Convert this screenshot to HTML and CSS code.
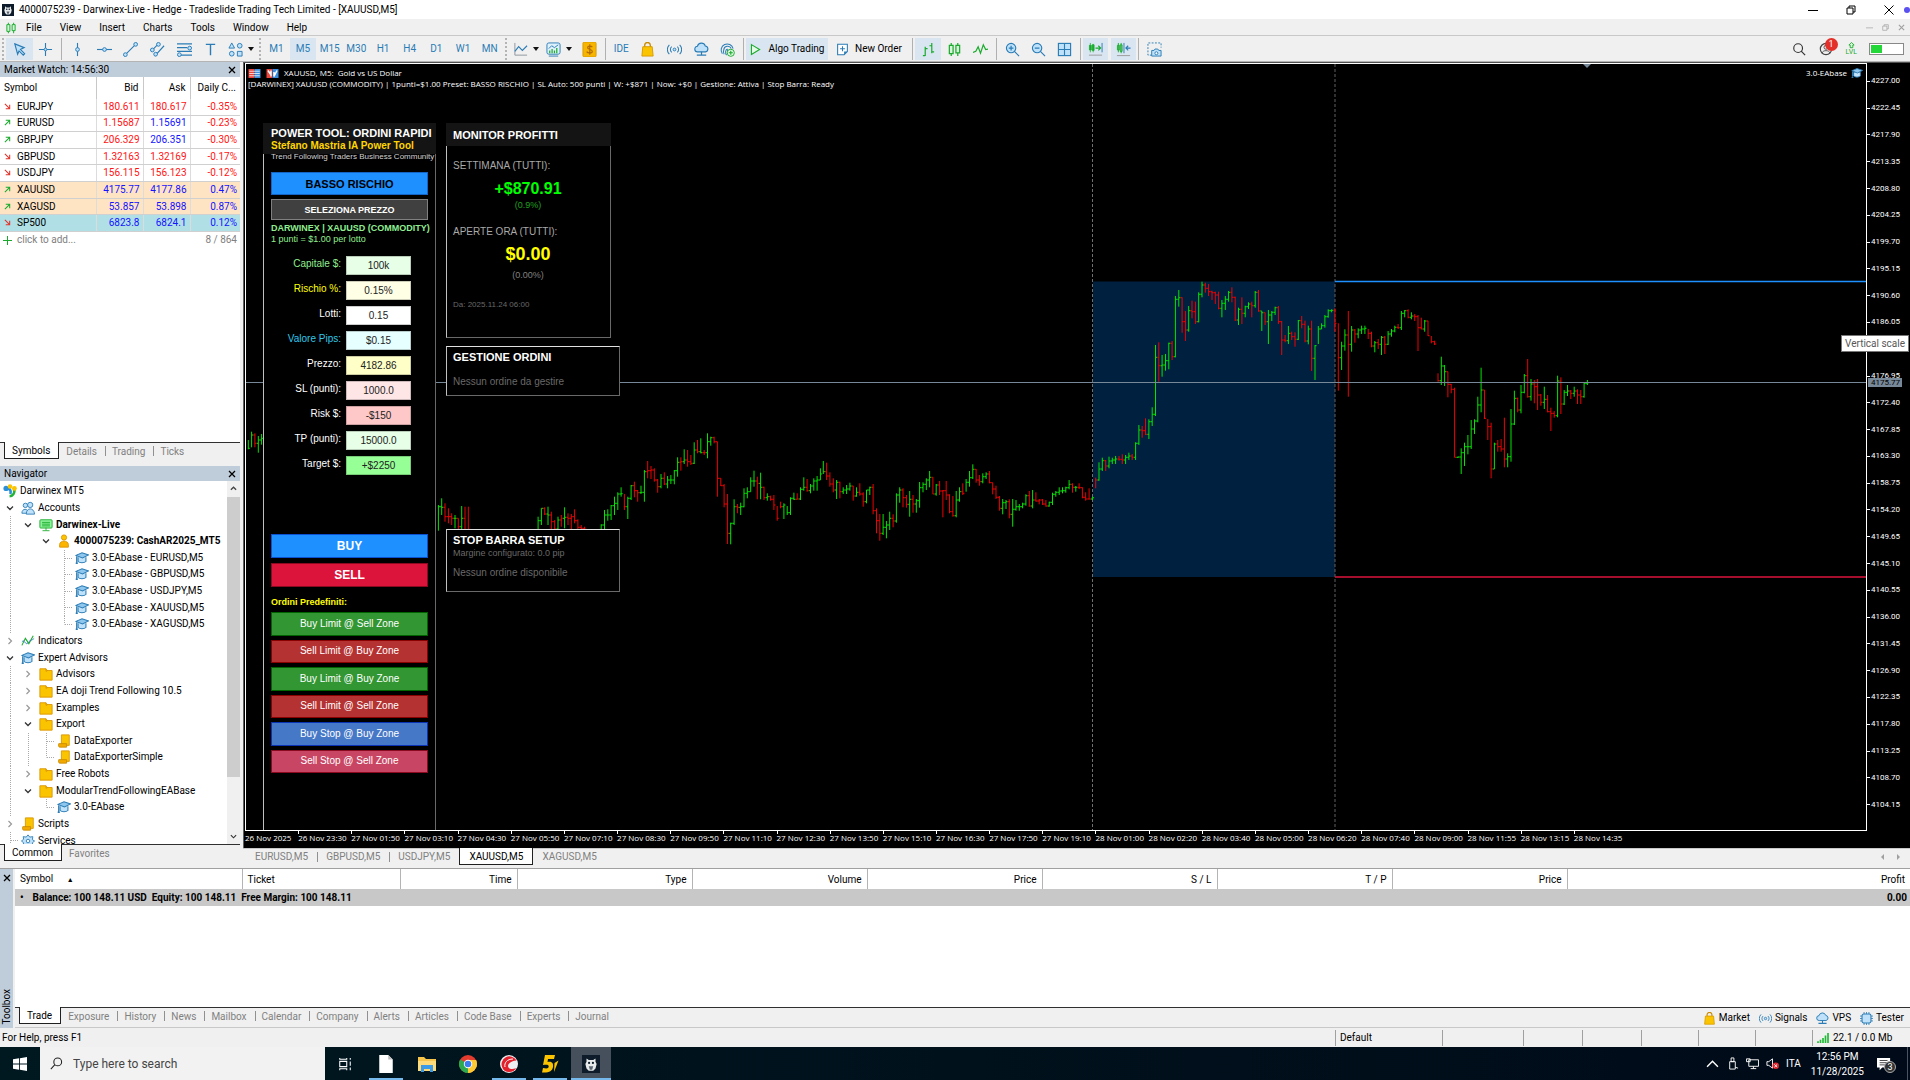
FILE: index.html
```html
<!DOCTYPE html>
<html lang="en">
<head>
  <meta charset="UTF-8">
  <meta name="viewport" content="width=device-width, initial-scale=1.0">
  <title>4000075239 - Darwinex-Live - Hedge</title>
  <link rel="stylesheet" href="styles.css">
</head>
<body>
  <svg class="defs" aria-hidden="true">
    <symbol id="i-owl" viewBox="0 0 16 16"><rect width="16" height="16" fill="#0d1b2a"/><path d="M4 3l2 1.500h4L12 3v3l1 2-1 4-2 2H6l-2-2-1-4 1-2z" fill="#e8eaec"/><circle cx="6.300" cy="7" r="1" fill="#0d1b2a"/><circle cx="9.700" cy="7" r="1" fill="#0d1b2a"/><path d="M6 10h4l-1 3H7z" fill="#5c6773"/></symbol>
    <symbol id="i-candles" viewBox="0 0 16 16"><path d="M4.500 1v2M4.500 13v2M11.500 1v2M11.500 12v3M2.500 3.500h4v9h-4zM9.500 3.500h4v8h-4z" fill="#d8f5dc" stroke="#1aab2c" stroke-width="1.300"/></symbol>
    <symbol id="i-cursor" viewBox="0 0 16 16"><path d="M3 2l10 4-4 2 4.500 4.500-1.500 1.500L7.500 9.500 6 13z" fill="#bfe2fa" stroke="#2b7cb5" stroke-width="1.200"/></symbol>
    <symbol id="i-cross" viewBox="0 0 16 16"><path d="M8 1v14M1 8h14" stroke="#2b7cb5" stroke-width="1.200"/><circle cx="8" cy="8" r="1.500" fill="#bfe2fa" stroke="#2b7cb5"/></symbol>
    <symbol id="i-vline" viewBox="0 0 16 16"><path d="M8 1v14" stroke="#2b7cb5" stroke-width="1.200"/><circle cx="8" cy="8" r="2" fill="#bfe2fa" stroke="#2b7cb5"/></symbol>
    <symbol id="i-hline" viewBox="0 0 16 16"><path d="M0 8h16" stroke="#2b7cb5" stroke-width="1.200"/><circle cx="8" cy="8" r="2" fill="#bfe2fa" stroke="#2b7cb5"/></symbol>
    <symbol id="i-trend" viewBox="0 0 16 16"><path d="M2 14L14 2" stroke="#2b7cb5" stroke-width="1.200"/><circle cx="2.500" cy="13.500" r="2" fill="#bfe2fa" stroke="#2b7cb5"/><circle cx="13.500" cy="2.500" r="2" fill="#bfe2fa" stroke="#2b7cb5"/></symbol>
    <symbol id="i-channel" viewBox="0 0 16 16"><path d="M2 9l7-7M5 15L15 4" stroke="#2b7cb5" stroke-width="1.200"/><circle cx="2.500" cy="8.500" r="2" fill="#bfe2fa" stroke="#2b7cb5"/><circle cx="9" cy="2.500" r="2" fill="#bfe2fa" stroke="#2b7cb5"/><circle cx="6" cy="13" r="2" fill="#bfe2fa" stroke="#2b7cb5"/></symbol>
    <symbol id="i-fibo" viewBox="0 0 16 16"><path d="M0 2h16M0 6h11M0 10h16M4 14h12" stroke="#2b7cb5" stroke-width="1.200"/><circle cx="13.500" cy="6.500" r="2" fill="#bfe2fa" stroke="#2b7cb5"/><circle cx="2.500" cy="13.500" r="2" fill="#bfe2fa" stroke="#2b7cb5"/></symbol>
    <symbol id="i-text" viewBox="0 0 16 16"><path d="M3 2.500h10M8 2.500V14" stroke="#2b7cb5" stroke-width="1.500"/></symbol>
    <symbol id="i-shapes" viewBox="0 0 16 16"><path d="M4 1l3 5.500H1zM10 10h5v5h-5z" fill="#bfe2fa" stroke="#2b7cb5"/><circle cx="12.500" cy="4" r="2.500" fill="#bfe2fa" stroke="#2b7cb5"/><circle cx="4" cy="12.500" r="2.500" fill="#bfe2fa" stroke="#2b7cb5"/></symbol>
    <symbol id="i-caret" viewBox="0 0 6 4"><path d="M0 0h6L3 4z" fill="#111"/></symbol>
    <symbol id="i-linechart" viewBox="0 0 16 16"><path d="M2 1v13h13" stroke="#8a949c" fill="none"/><path d="M2 10l4-5 4 4 5-5" stroke="#2b7cb5" fill="none" stroke-width="1.200"/></symbol>
    <symbol id="i-indic" viewBox="0 0 16 16"><rect x="1" y="1" width="14" height="12" rx="2" fill="#dff1fd" stroke="#2b7cb5"/><path d="M3 7l3-3 3 2 4-3" stroke="#2b7cb5" fill="none"/><path d="M4 12V9M6.500 12V7.500M9 12V9M11.500 12V6.500" stroke="#1aab2c" stroke-width="1.300"/><path d="M3 15h10" stroke="#2b7cb5"/></symbol>
    <symbol id="i-dollar" viewBox="0 0 16 16"><rect x="1" y="0" width="14" height="16" rx="1.500" fill="#f7b500" stroke="#d79a00"/><path d="M11 5.500C10 4 6 4 6 6s5 1.500 5 4-5 2-6 .3M8.300 2.500v11" stroke="#b36b00" fill="none" stroke-width="1.300"/></symbol>
    <symbol id="i-bag" viewBox="0 0 16 16"><path d="M5 6V3.500a3 3 0 016 0V6" fill="none" stroke="#c98a00" stroke-width="1.400"/><path d="M3 5h10l1 10H2z" fill="#fbc400" stroke="#d79a00"/></symbol>
    <symbol id="i-signal" viewBox="0 0 16 16"><circle cx="8" cy="8" r="1.500" fill="#bfe2fa" stroke="#2b7cb5"/><path d="M5 5a4 4 0 000 6M11 5a4 4 0 010 6M2.500 3a7 7 0 000 10M13.500 3a7 7 0 010 10" fill="none" stroke="#2b7cb5" stroke-width="1.100"/></symbol>
    <symbol id="i-cloud" viewBox="0 0 16 16"><path d="M4 10.500a3 3 0 01-.3-6A4.300 4.300 0 0112 4.200a3.200 3.200 0 01.3 6.300z" fill="#bfe2fa" stroke="#2b7cb5" stroke-width="1.200"/><path d="M8 10.500v3M3 14h10" stroke="#2b7cb5" stroke-width="1.300"/></symbol>
    <symbol id="i-finger" viewBox="0 0 16 16"><path d="M2.500 12.500a6.500 6.500 0 1111.500-5.500M4.500 13a4.500 4.500 0 01-.5-4.500 4.200 4.200 0 018-1.500M7 14c-1.500-2-1.500-6 1-6.500M8 8v2" fill="none" stroke="#2b7cb5" stroke-width="1.100"/><circle cx="11.500" cy="11.500" r="3.800" fill="#e4fbe6" stroke="#1aab2c"/><path d="M11.500 9.300v4.400M9.300 11.500h4.400" stroke="#1aab2c" stroke-width="1.200"/></symbol>
    <symbol id="i-play" viewBox="0 0 16 16"><path d="M3 2l10 6-10 6z" fill="#e4fbe6" stroke="#1aab2c" stroke-width="1.400"/></symbol>
    <symbol id="i-order" viewBox="0 0 16 16"><path d="M2 1.500h12v9l-4 4H2z" fill="#fff" stroke="#2b7cb5" stroke-width="1.300"/><path d="M14 10.500h-4v4z" fill="#2b7cb5"/><path d="M8 4v6M5 7h6" stroke="#2b7cb5" stroke-width="1.300"/></symbol>
    <symbol id="i-bars" viewBox="0 0 16 16"><path d="M4.500 5v10M2 14.500h2.500M4.500 7H7M11.500 1v11M9 4h2.500M11.500 10.500H14" stroke="#1aab2c" stroke-width="1.300"/></symbol>
    <symbol id="i-zig" viewBox="0 0 16 16"><path d="M0 11l3-1 2.500-5L8 12l3-9 2.500 5 2.500-.5" fill="none" stroke="#1aab2c" stroke-width="1.300"/></symbol>
    <symbol id="i-zin" viewBox="0 0 16 16"><circle cx="6.500" cy="6.500" r="5" fill="#bfe2fa" stroke="#2b7cb5" stroke-width="1.200"/><path d="M10 10l5 5M4 6.500h5M6.500 4v5" stroke="#2b7cb5" stroke-width="1.300"/></symbol>
    <symbol id="i-zout" viewBox="0 0 16 16"><circle cx="6.500" cy="6.500" r="5" fill="#bfe2fa" stroke="#2b7cb5" stroke-width="1.200"/><path d="M10 10l5 5M4 6.500h5" stroke="#2b7cb5" stroke-width="1.300"/></symbol>
    <symbol id="i-grid" viewBox="0 0 16 16"><rect x="1.500" y="1.500" width="13" height="13" fill="#bfe2fa" stroke="#2b7cb5" stroke-width="1.200"/><path d="M8 1.500v13M1.500 8h13" stroke="#2b7cb5" stroke-width="1.200"/></symbol>
    <symbol id="i-shift" viewBox="0 0 16 16"><path d="M2.500 1v10M5.500 2v9M1.500 3.500h2v5h-2zM4.500 3h2v6h-2z" stroke="#1aab2c" fill="#1aab2c" stroke-width=".8"/><path d="M8 6.500h5M11 4l2.500 2.500L11 9" stroke="#1aab2c" fill="none" stroke-width="1.200"/><path d="M15 1v10" stroke="#2b7cb5"/><path d="M1 14h14" stroke="#999"/></symbol>
    <symbol id="i-scroll" viewBox="0 0 16 16"><path d="M2.500 1v10M5.500 1v11M1.500 3.500h2v5h-2zM4.500 3h2v7h-2z" stroke="#1aab2c" fill="none"/><path d="M8.500 1v11" stroke="#2b7cb5"/><path d="M15.500 6.500h-5M13 4l-2.500 2.500L13 9" stroke="#2b7cb5" fill="none" stroke-width="1.200"/><path d="M1 14.500h14" stroke="#999"/></symbol>
    <symbol id="i-camera" viewBox="0 0 16 16"><path d="M5 14H1V1h14v5" fill="none" stroke="#2b7cb5" stroke-dasharray="2 1.500"/><path d="M5 9h2.500l1-1.500h3L12.500 9H15v6H5z" fill="#bfe2fa" stroke="#2b7cb5"/><circle cx="10" cy="12" r="1.600" fill="#fff" stroke="#2b7cb5"/></symbol>
    <symbol id="i-search" viewBox="0 0 16 16"><circle cx="7" cy="7" r="5" fill="none" stroke="currentColor" stroke-width="1.300"/><path d="M10.500 10.500L15 15" stroke="currentColor" stroke-width="1.400"/></symbol>
    <symbol id="i-tsearch" viewBox="0 0 16 16"><circle cx="9.500" cy="6" r="4.800" fill="none" stroke="#222" stroke-width="1.300"/><path d="M6 9.500L1 15" stroke="#222" stroke-width="1.300"/></symbol>
    <symbol id="i-user" viewBox="0 0 16 16"><circle cx="8" cy="8" r="6.500" fill="none" stroke="#444" stroke-width="1.300"/><circle cx="8" cy="6" r="2.300" fill="none" stroke="#444"/><path d="M3.500 12.500c1-3.500 8-3.500 9 0" fill="none" stroke="#444"/></symbol>
    <symbol id="i-up" viewBox="0 0 8 8"><path d="M4 .5l3 3H5.500v3h-3v-3H1z" fill="#d8f5dc" stroke="#1aab2c"/></symbol>
    <symbol id="i-cap" viewBox="0 0 16 16"><path d="M3.500 7v5c2 2 7 2 9 0V7" fill="#bfe2fa" stroke="#2b7cb5" stroke-width="1.200"/><path d="M1 5l7-3 7.500 2.500L8.500 8z" fill="#8fc7ee" stroke="#2b7cb5" stroke-width="1.200"/><path d="M2 6v7M.8 14h2.400" stroke="#2b7cb5" stroke-width="1.500"/></symbol>
    <symbol id="i-people" viewBox="0 0 16 16"><circle cx="5" cy="5" r="2.500" fill="#bfe2fa" stroke="#2b7cb5"/><path d="M1 14c0-6 7-6 8 0z" fill="#bfe2fa" stroke="#2b7cb5"/><circle cx="10.500" cy="4.500" r="3" fill="#bfe2fa" stroke="#2b7cb5"/><path d="M6 15c0-8 9-8 9.500 0z" fill="#bfe2fa" stroke="#2b7cb5"/></symbol>
    <symbol id="i-server" viewBox="0 0 16 16"><rect x="1" y="2" width="14" height="9.500" rx="1" fill="#8df09a" stroke="#1aab2c"/><path d="M3.500 5h9M3.500 7h9M3.500 9h9M4 14.500h8M8 11v3" stroke="#1aab2c"/></symbol>
    <symbol id="i-person" viewBox="0 0 16 16"><circle cx="8" cy="4" r="3" fill="#fbc400" stroke="#d99500"/><path d="M3 15V12c0-5 10-5 10 0v3z" fill="#fbb400" stroke="#d99500"/></symbol>
    <symbol id="i-ind" viewBox="0 0 16 16"><path d="M1 13l4-8 4 6 5-9" fill="none" stroke="#1aab2c" stroke-width="1.200"/><path d="M1 9c3-4 4 5 7 1s4-2 7-5" fill="none" stroke="#2b7cb5"/></symbol>
    <symbol id="i-folder" viewBox="0 0 16 16"><path d="M1 2h7l1 2h6v11H1z" fill="#fbc400" stroke="#d99500"/><path d="M8 2v3l2-1" stroke="#d99500" fill="none"/></symbol>
    <symbol id="i-script" viewBox="0 0 16 16"><path d="M5 1h9v12H5z" fill="#fbc400" stroke="#d99500"/><path d="M2 11h9v4H3c-1.500 0-1.500-3-1-4z" fill="#f2a900" stroke="#c98a00"/></symbol>
    <symbol id="i-gear" viewBox="0 0 16 16"><path d="M8 1l2 2.500 3.500-.5-.5 3.500L15.500 8 13 10l.5 3.500-3.500-.5L8 15.500 6 13l-3.500.5L3 10 .5 8 3 6 2.500 3l3.500.5z" fill="#bfe2fa" stroke="#2b7cb5"/><circle cx="8" cy="8" r="2" fill="#fff" stroke="#2b7cb5"/></symbol>
    <symbol id="i-mt5" viewBox="0 0 16 16"><path d="M3 5.500c5-1 6.500 1.500 5.500 6" stroke="#2b8fd8" fill="none" stroke-width="3"/><path d="M7.500 14c4 0 6-3.500 5.500-8.500" stroke="#22b43a" fill="none" stroke-width="3"/><circle cx="3.500" cy="5" r="3" fill="#2b8fd8"/><circle cx="8" cy="2.800" r="2.600" fill="#fbc400"/><circle cx="13" cy="5" r="2.800" fill="#fbc400"/></symbol>
    <symbol id="i-down" viewBox="0 0 8 8"><path d="M1 2.500l3 3 3-3" fill="none" stroke="#333" stroke-width="1.300"/></symbol>
    <symbol id="i-right" viewBox="0 0 8 8"><path d="M2.500 1l3 3-3 3" fill="none" stroke="#999" stroke-width="1.200"/></symbol>
    <symbol id="i-scup" viewBox="0 0 8 8"><path d="M1 5.500l3-3 3 3" fill="none" stroke="#444" stroke-width="1.500"/></symbol>
    <symbol id="i-ne" viewBox="0 0 8 8"><path d="M1 7l5.500-5.500M2 1.500h4.500V6" fill="none" stroke="#1aab2c" stroke-width="1.200"/></symbol>
    <symbol id="i-se" viewBox="0 0 8 8"><path d="M1 1l5.500 5.500M2 6.500h4.500V2" fill="none" stroke="#e0342b" stroke-width="1.200"/></symbol>
    <symbol id="i-x" viewBox="0 0 8 8"><path d="M1 1l6 6M7 1L1 7" stroke="currentColor" stroke-width="1.300"/></symbol>
    <symbol id="i-close" viewBox="0 0 10 10"><path d="M.5.5l9 9M9.500.5l-9 9" stroke="currentColor"/></symbol>
    <symbol id="i-min" viewBox="0 0 10 10"><path d="M0 5.500h10" stroke="currentColor"/></symbol>
    <symbol id="i-restore" viewBox="0 0 10 10"><path d="M1 3h6v6H1zM3 3V1h6v6H7" fill="none" stroke="currentColor"/></symbol>
    <symbol id="i-chip" viewBox="0 0 16 16"><path d="M5 0v16M8 0v16M11 0v16M0 5h16M0 8h16M0 11h16" stroke="#2b7cb5"/><rect x="2.500" y="2.500" width="11" height="11" rx="2" fill="#bfe2fa" stroke="#2b7cb5" stroke-width="1.300"/></symbol>
  </svg>

  <header class="titlebar">
    <svg class="icon12"><use href="#i-owl"/></svg>
    <h1>4000075239 - Darwinex-Live - Hedge - Tradeslide Trading Tech Limited - [XAUUSD,M5]</h1>
    <div class="win-controls">
      <button aria-label="Minimize"><svg><use href="#i-min"/></svg></button>
      <button aria-label="Restore"><svg><use href="#i-restore"/></svg></button>
      <button aria-label="Close"><svg><use href="#i-close"/></svg></button>
      <span class="rec-dot"></span>
    </div>
  </header>

  <nav class="menubar">
    <svg class="icon12"><use href="#i-candles"/></svg>
    <button>File</button>
    <button>View</button>
    <button>Insert</button>
    <button>Charts</button>
    <button>Tools</button>
    <button>Window</button>
    <button>Help</button>
    <div class="mdi-controls">
      <button aria-label="Minimize chart"><svg><use href="#i-min"/></svg></button>
      <button aria-label="Restore chart"><svg><use href="#i-restore"/></svg></button>
      <button aria-label="Close chart"><svg><use href="#i-x"/></svg></button>
    </div>
  </nav>

  <div class="toolbar">
    <i class="grip"></i>
    <div class="group w53">
      <button class="on" aria-label="Cursor"><svg><use href="#i-cursor"/></svg></button>
      <button aria-label="Crosshair"><svg><use href="#i-cross"/></svg></button>
    </div>
    <i class="sep"></i>
    <div class="group w160">
      <button aria-label="Vertical line"><svg><use href="#i-vline"/></svg></button>
      <button aria-label="Horizontal line"><svg><use href="#i-hline"/></svg></button>
      <button aria-label="Trendline"><svg><use href="#i-trend"/></svg></button>
      <button aria-label="Channel"><svg><use href="#i-channel"/></svg></button>
      <button aria-label="Fibonacci"><svg><use href="#i-fibo"/></svg></button>
      <button aria-label="Text"><svg><use href="#i-text"/></svg></button>
    </div>
    <div class="group w33">
      <button aria-label="Shapes"><svg><use href="#i-shapes"/></svg><svg class="caret"><use href="#i-caret"/></svg></button>
    </div>
    <i class="grip"></i>
    <div class="group w240">
      <button>M1</button>
      <button class="on">M5</button>
      <button>M15</button>
      <button>M30</button>
      <button>H1</button>
      <button>H4</button>
      <button>D1</button>
      <button>W1</button>
      <button>MN</button>
    </div>
    <i class="grip"></i>
    <div class="group w67">
      <button aria-label="Chart type"><svg><use href="#i-linechart"/></svg><svg class="caret"><use href="#i-caret"/></svg></button>
      <button aria-label="Indicators"><svg><use href="#i-indic"/></svg><svg class="caret"><use href="#i-caret"/></svg></button>
    </div>
    <div class="group w27">
      <button aria-label="Deposit"><svg><use href="#i-dollar"/></svg></button>
    </div>
    <i class="sep"></i>
    <div class="group w133">
      <button>IDE</button>
      <button aria-label="Market"><svg><use href="#i-bag"/></svg></button>
      <button aria-label="Signals"><svg><use href="#i-signal"/></svg></button>
      <button aria-label="VPS"><svg><use href="#i-cloud"/></svg></button>
      <button aria-label="Copy"><svg><use href="#i-finger"/></svg></button>
    </div>
    <i class="sep"></i>
    <div class="group text">
      <button class="on"><svg><use href="#i-play"/></svg>Algo Trading</button>
      <button><svg><use href="#i-order"/></svg>New Order</button>
    </div>
    <i class="sep"></i>
    <div class="group w79">
      <button class="on" aria-label="Bar chart"><svg><use href="#i-bars"/></svg></button>
      <button aria-label="Candlesticks"><svg><use href="#i-candles"/></svg></button>
      <button aria-label="Line chart"><svg><use href="#i-zig"/></svg></button>
    </div>
    <i class="sep"></i>
    <div class="group w79">
      <button aria-label="Zoom in"><svg><use href="#i-zin"/></svg></button>
      <button aria-label="Zoom out"><svg><use href="#i-zout"/></svg></button>
      <button aria-label="Tile windows"><svg><use href="#i-grid"/></svg></button>
    </div>
    <i class="sep"></i>
    <div class="group pair w53">
      <button class="on" aria-label="Auto scroll"><svg><use href="#i-shift"/></svg></button>
      <button class="on" aria-label="Chart shift"><svg><use href="#i-scroll"/></svg></button>
    </div>
    <i class="sep"></i>
    <div class="group w27">
      <button aria-label="Screenshot"><svg><use href="#i-camera"/></svg></button>
    </div>
    <div class="toolbar-right">
      <button aria-label="Search"><svg class="icon14"><use href="#i-search"/></svg></button>
      <button class="account" aria-label="Account"><svg class="icon14"><use href="#i-user"/></svg><span class="badge">1</span></button>
      <span class="lvl"><svg><use href="#i-up"/></svg>LVL</span>
      <span class="battery"><i></i></span>
    </div>
  </div>

  <main>
    <aside>
      <section class="dock">
        <h2>Market Watch: 14:56:30<button aria-label="Close Market Watch"><svg><use href="#i-x"/></svg></button></h2>
        <table class="quotes">
          <thead>
            <tr><th>Symbol</th><th>Bid</th><th>Ask</th><th>Daily C...</th></tr>
          </thead>
          <tbody>
            <tr><td><svg><use href="#i-se"/></svg>EURJPY</td><td class="dn">180.611</td><td class="dn">180.617</td><td class="dn">-0.35%</td></tr>
            <tr><td><svg><use href="#i-ne"/></svg>EURUSD</td><td class="dn">1.15687</td><td class="up">1.15691</td><td class="dn">-0.23%</td></tr>
            <tr><td><svg><use href="#i-ne"/></svg>GBPJPY</td><td class="dn">206.329</td><td class="up">206.351</td><td class="dn">-0.30%</td></tr>
            <tr><td><svg><use href="#i-se"/></svg>GBPUSD</td><td class="dn">1.32163</td><td class="dn">1.32169</td><td class="dn">-0.17%</td></tr>
            <tr><td><svg><use href="#i-se"/></svg>USDJPY</td><td class="dn">156.115</td><td class="dn">156.123</td><td class="dn">-0.12%</td></tr>
            <tr class="metal"><td><svg><use href="#i-ne"/></svg>XAUUSD</td><td class="up">4175.77</td><td class="up">4177.86</td><td class="up">0.47%</td></tr>
            <tr class="metal"><td><svg><use href="#i-ne"/></svg>XAGUSD</td><td class="up">53.857</td><td class="up">53.898</td><td class="up">0.87%</td></tr>
            <tr class="index"><td><svg><use href="#i-se"/></svg>SP500</td><td class="up">6823.8</td><td class="up">6824.1</td><td class="up">0.12%</td></tr>
          </tbody>
        </table>
        <div class="add-row"><span class="plus"></span><span>click to add...</span><span class="count">8 / 864</span></div>
        <div class="tabs">
          <button class="active">Symbols</button>
          <button>Details</button>
          <button>Trading</button>
          <button>Ticks</button>
        </div>
      </section>

      <section class="dock">
        <h2>Navigator<button aria-label="Close Navigator"><svg><use href="#i-x"/></svg></button></h2>
        <div class="tree-wrap">
          <ul class="tree">
            <li><svg><use href="#i-mt5"/></svg>Darwinex MT5</li>
            <li><i class="g"><svg><use href="#i-down"/></svg></i><svg><use href="#i-people"/></svg>Accounts</li>
            <li><i class="g v"></i><i class="g"><svg><use href="#i-down"/></svg></i><svg><use href="#i-server"/></svg><b>Darwinex-Live</b></li>
            <li><i class="g v"></i><i class="g"></i><i class="g"><svg><use href="#i-down"/></svg></i><svg><use href="#i-person"/></svg><b>4000075239: CashAR2025_MT5</b></li>
            <li><i class="g v"></i><i class="g"></i><i class="g"></i><i class="g v h"></i><svg><use href="#i-cap"/></svg>3.0-EAbase - EURUSD,M5</li>
            <li><i class="g v"></i><i class="g"></i><i class="g"></i><i class="g v h"></i><svg><use href="#i-cap"/></svg>3.0-EAbase - GBPUSD,M5</li>
            <li><i class="g v"></i><i class="g"></i><i class="g"></i><i class="g v h"></i><svg><use href="#i-cap"/></svg>3.0-EAbase - USDJPY,M5</li>
            <li><i class="g v"></i><i class="g"></i><i class="g"></i><i class="g v h"></i><svg><use href="#i-cap"/></svg>3.0-EAbase - XAUUSD,M5</li>
            <li><i class="g v"></i><i class="g"></i><i class="g"></i><i class="g v h end"></i><svg><use href="#i-cap"/></svg>3.0-EAbase - XAGUSD,M5</li>
            <li><i class="g"><svg><use href="#i-right"/></svg></i><svg><use href="#i-ind"/></svg>Indicators</li>
            <li><i class="g"><svg><use href="#i-down"/></svg></i><svg><use href="#i-cap"/></svg>Expert Advisors</li>
            <li><i class="g v"></i><i class="g"><svg><use href="#i-right"/></svg></i><svg><use href="#i-folder"/></svg>Advisors</li>
            <li><i class="g v"></i><i class="g"><svg><use href="#i-right"/></svg></i><svg><use href="#i-folder"/></svg>EA doji Trend Following 10.5</li>
            <li><i class="g v"></i><i class="g"><svg><use href="#i-right"/></svg></i><svg><use href="#i-folder"/></svg>Examples</li>
            <li><i class="g v"></i><i class="g"><svg><use href="#i-down"/></svg></i><svg><use href="#i-folder"/></svg>Export</li>
            <li><i class="g v"></i><i class="g v"></i><i class="g v h"></i><svg><use href="#i-script"/></svg>DataExporter</li>
            <li><i class="g v"></i><i class="g v"></i><i class="g v h end"></i><svg><use href="#i-script"/></svg>DataExporterSimple</li>
            <li><i class="g v"></i><i class="g"><svg><use href="#i-right"/></svg></i><svg><use href="#i-folder"/></svg>Free Robots</li>
            <li><i class="g v"></i><i class="g"><svg><use href="#i-down"/></svg></i><svg><use href="#i-folder"/></svg>ModularTrendFollowingEABase</li>
            <li><i class="g v"></i><i class="g"></i><i class="g v h end"></i><svg><use href="#i-cap"/></svg>3.0-EAbase</li>
            <li><i class="g"><svg><use href="#i-right"/></svg></i><svg><use href="#i-script"/></svg>Scripts</li>
            <li><i class="g v h"></i><svg><use href="#i-gear"/></svg>Services</li>
          </ul>
          <div class="scrollbar">
            <svg><use href="#i-scup"/></svg>
            <i class="thumb"></i>
            <svg><use href="#i-down"/></svg>
          </div>
        </div>
        <div class="tabs">
          <button class="active">Common</button>
          <button>Favorites</button>
        </div>
      </section>
    </aside>

    <section class="workspace">
      <div class="chart">
        <div class="plot">
          <svg class="bars" id="bars" viewBox="0 0 1620 766" preserveAspectRatio="none"></svg>

          <div class="chart-head">
            <div class="chart-title">
              <svg viewBox="0 0 16 12"><rect width="8" height="12" fill="#e8453c"/><rect x="8" width="8" height="12" fill="#3c8fe0"/><path d="M1 3h14M1 6h14M1 9h14" stroke="#fff"/></svg>
              <svg viewBox="0 0 16 12"><rect width="8" height="12" fill="#e8453c"/><rect x="8" width="8" height="12" fill="#3c8fe0"/><path d="M2 2l4 6M6 2v8M10 4v6l4-8" stroke="#fff" stroke-width="2" fill="none"/></svg>
              <span>XAUUSD, M5:&nbsp; Gold vs US Dollar</span>
              <span class="ea">3.0-EAbase<svg class="cap"><use href="#i-cap"/></svg></span>
            </div>
            <p>[DARWINEX] XAUUSD (COMMODITY) | 1punti=$1.00 Preset: BASSO RISCHIO | SL Auto: 500 punti | W: +$871 | Now: +$0 | Gestione: Attiva | Stop Barra: Ready</p>
          </div>

          <div class="panel power">
            <div class="panel-head">
              <h3>POWER TOOL: ORDINI RAPIDI</h3>
              <p class="author">Stefano Mastria IA Power Tool</p>
              <p class="tag">Trend Following Traders Business Community</p>
            </div>
            <div class="panel-body">
              <button class="preset">BASSO RISCHIO</button>
              <button class="pick">SELEZIONA PREZZO</button>
              <p class="broker">DARWINEX | XAUUSD (COMMODITY)</p>
              <p class="point">1 punti = $1.00 per lotto</p>
              <form class="fields">
                <label class="c-green" for="capitale">Capitale $:</label><input class="b-mint" id="capitale" value="100k">
                <label class="c-yellow" for="rischio">Rischio %:</label><input class="b-ivory" id="rischio" value="0.15%">
                <label for="lotti">Lotti:</label><input id="lotti" value="0.15">
                <label class="c-cyan" for="pips">Valore Pips:</label><input class="b-cyan" id="pips" value="$0.15">
                <label for="prezzo">Prezzo:</label><input class="b-yellow" id="prezzo" value="4182.86">
                <label for="sl">SL (punti):</label><input class="b-rose" id="sl" value="1000.0">
                <label for="risk">Risk $:</label><input class="b-pink" id="risk" value="-$150">
                <label for="tp">TP (punti):</label><input class="b-mint" id="tp" value="15000.0">
                <label for="target">Target $:</label><input class="b-green" id="target" value="+$2250">
              </form>
              <button class="deal buy">BUY</button>
              <button class="deal sell">SELL</button>
              <p class="presets-title">Ordini Predefiniti:</p>
              <div class="presets">
                <button class="green">Buy Limit @ Sell Zone</button>
                <button class="red">Sell Limit @ Buy Zone</button>
                <button class="green">Buy Limit @ Buy Zone</button>
                <button class="red">Sell Limit @ Sell Zone</button>
                <button class="blue">Buy Stop @ Buy Zone</button>
                <button class="pink">Sell Stop @ Sell Zone</button>
              </div>
            </div>
          </div>

          <div class="panel monitor">
            <div class="panel-head"><h3>MONITOR PROFITTI</h3></div>
            <div class="panel-body">
              <p class="cap-label">SETTIMANA (TUTTI):</p>
              <p class="week">+$870.91</p>
              <p class="week-pct">(0.9%)</p>
              <p class="cap-label open">APERTE ORA (TUTTI):</p>
              <p class="now">$0.00</p>
              <p class="now-pct">(0.00%)</p>
              <p class="since">Da: 2025.11.24 06:00</p>
            </div>
          </div>

          <div class="panel box orders">
            <h3>GESTIONE ORDINI</h3>
            <p>Nessun ordine da gestire</p>
          </div>

          <div class="panel box stop">
            <h3>STOP BARRA SETUP</h3>
            <p class="margin">Margine configurato: 0.0 pip</p>
            <p>Nessun ordine disponibile</p>
          </div>
        </div>

        <div class="price-axis">
          <ol id="prices"></ol>
          <span class="last">4175.77</span>
          <span class="tooltip">Vertical scale</span>
        </div>
        <ol class="time-axis" id="times"></ol>
      </div>

      <div class="tabs chart-tabs">
        <button>EURUSD,M5</button>
        <button>GBPUSD,M5</button>
        <button>USDJPY,M5</button>
        <button class="active">XAUUSD,M5</button>
        <button>XAGUSD,M5</button>
        <span class="tab-scroll"><svg viewBox="0 0 4 8"><path d="M4 0v8L0 4z" fill="#a0a0a0"/></svg><svg viewBox="0 0 4 8"><path d="M0 0v8l4-4z" fill="#a0a0a0"/></svg></span>
      </div>
    </section>
  </main>

  <section class="toolbox">
    <div class="toolbox-side">
      <button aria-label="Close Toolbox"><svg><use href="#i-x"/></svg></button>
      <span>Toolbox</span>
    </div>
    <div class="toolbox-main">
      <table class="trades">
        <colgroup><col class="c1"><col class="c2"><col class="c3"><col class="c4"><col class="c4"><col class="c4"><col class="c4"><col class="c4"><col class="c4"><col></colgroup>
        <thead>
          <tr><th class="left">Symbol <span class="sort">▲</span></th><th class="left">Ticket</th><th>Time</th><th>Type</th><th>Volume</th><th>Price</th><th>S / L</th><th>T / P</th><th>Price</th><th>Profit</th></tr>
        </thead>
        <tbody>
          <tr><td class="left" colspan="9"><span class="bullet">•</span>Balance: 100 148.11 USD&nbsp; Equity: 100 148.11&nbsp; Free Margin: 100 148.11</td><td>0.00</td></tr>
        </tbody>
      </table>
      <div class="tabs toolbox-tabs">
        <button class="active">Trade</button>
        <button>Exposure</button>
        <button>History</button>
        <button>News</button>
        <button>Mailbox</button>
        <button>Calendar</button>
        <button>Company</button>
        <button>Alerts</button>
        <button>Articles</button>
        <button>Code Base</button>
        <button>Experts</button>
        <button>Journal</button>
        <div class="services">
          <a href="#"><svg><use href="#i-bag"/></svg>Market</a>
          <a href="#"><svg><use href="#i-signal"/></svg>Signals</a>
          <a href="#"><svg><use href="#i-cloud"/></svg>VPS</a>
          <a href="#"><svg><use href="#i-chip"/></svg>Tester</a>
        </div>
      </div>
    </div>
  </section>

  <footer class="statusbar">
    <span class="help">For Help, press F1</span>
    <span class="s107">Default</span>
    <span class="s81"></span>
    <span class="s59"></span>
    <span class="s59"></span>
    <span class="s57"></span>
    <span class="s57"></span>
    <span class="s57"></span>
    <span class="net"><svg viewBox="0 0 14 12"><path d="M1 12v-2M4 12V8M7 12V6M10 12V3M13 12V0" stroke="#1fb935" stroke-width="2"/></svg>22.1 / 0.0 Mb</span>
  </footer>

  <div class="taskbar">
    <button class="start" aria-label="Start"><svg viewBox="0 0 16 16"><path d="M0 2.500l7-1v6H0zM8 1.300L16 0v7.500H8zM0 8.500h7v6l-7-1zM8 8.500h8V16l-8-1.300z" fill="#fff"/></svg></button>
    <label class="search"><svg><use href="#i-tsearch"/></svg><input type="text" placeholder="Type here to search" aria-label="Search"></label>
    <div class="apps">
      <button aria-label="Task view"><svg viewBox="0 0 16 16"><path d="M2 5h8v6H2zM2 1v1.500h8V1M2 15v-1.500h8V15M14 1v2M14 5v5M14 12v3" fill="none" stroke="#fff" stroke-width="1.200"/></svg></button>
      <button class="run" aria-label="Document"><svg viewBox="0 0 16 16"><path d="M2 0h8l4 4v12H2z" fill="#fff"/><path d="M10 0v4h4z" fill="#bbb"/></svg></button>
      <button aria-label="File Explorer"><svg viewBox="0 0 18 16"><path d="M0 1h6l2 2h10v12H0z" fill="#f7c64a"/><path d="M0 5h18v10H0z" fill="#fddb7a"/><path d="M3 9h12v7h-3v-3H6v3H3z" fill="#3c9be8"/></svg></button>
      <button aria-label="Chrome"><svg viewBox="0 0 18 18"><circle cx="9" cy="9" r="9" fill="#e33b2e"/><path d="M9 9L1.200 4.500A9 9 0 009 18z" fill="#2da94f"/><path d="M9 9h8.900A9 9 0 019 18z" fill="#fcc934"/><path d="M9 5h8.100A9 9 0 0118 9a9 9 0 01-9 9l3.500-7z" fill="#fcc934"/><circle cx="9" cy="9" r="4.200" fill="#fff"/><circle cx="9" cy="9" r="3.300" fill="#3b7ded"/></svg></button>
      <button class="run" aria-label="Recorder"><svg viewBox="0 0 18 18"><circle cx="9" cy="9" r="9" fill="#eceff1"/><path d="M16.500 5.500A7.800 7.800 0 102.500 13c1 2.500 3.500 4 6.500 4 3.500 0 6-1.500 7-4-2.500 1.500-6 1.500-7.500-.5C7 10 9 6.500 16.500 5.500z" fill="#e3202b"/><path d="M5 12c-1-4 2-8 8-8" stroke="#fff" fill="none"/></svg></button>
      <button class="run" aria-label="MetaTrader 5"><svg viewBox="0 0 18 18"><path d="M4 0h10l-1 4H7l-.5 3c5-1 6 2 5.500 5-.7 4-4 6-11 5.500l1-4.500c4 .8 5.500.5 5.700-1.500.2-2-2-2.200-5.700-1.500z" fill="#fcc400"/><path d="M13.500 8l4-2.500L13 17z" fill="#fcc400"/></svg></button>
      <button class="run current" aria-label="Darwinex MT5"><svg viewBox="0 0 16 16"><use href="#i-owl"/></svg></button>
    </div>
    <div class="tray">
      <svg viewBox="0 0 12 12"><path d="M1 9l5-5 5 5" fill="none" stroke="#fff" stroke-width="1.300"/></svg>
      <svg viewBox="0 0 12 14"><path d="M3 5h6v8H3zM4.500 1h3v4h-3zM9 11l3 1" fill="none" stroke="#fff"/></svg>
      <svg viewBox="0 0 14 12"><path d="M3 2h10.500v7H3zM5 11.500h6M8 9v2.500M.5 1h4v3h-4z" fill="#00101a" stroke="#fff"/></svg>
      <svg viewBox="0 0 14 12"><path d="M1 4h2l4-3v10L3 8H1z" fill="none" stroke="#fff"/><circle cx="10.500" cy="8.500" r="3.500" fill="#e0242b"/><path d="M9 7l3 3M12 7l-3 3" stroke="#fff"/></svg>
      <span class="lang">ITA</span>
      <span class="clock">12:56 PM<br>11/28/2025</span>
      <button class="notes" aria-label="Notifications"><svg viewBox="0 0 16 16"><path d="M0 1h15v11H6l-3 3v-3H0z" fill="#fff"/><path d="M3 4h9M3 6.500h9M3 9h6" stroke="#333"/></svg><span>3</span></button>
    </div>
  </div>

  <script src="chart.js"></script>
</body>
</html>
```

FILE: styles.css
```css
* {
  box-sizing: border-box;
}
body {
  margin: 0;
  height: 100vh;
  display: flex;
  flex-direction: column;
  overflow: hidden;
  background: #f0f0f0;
  color: #000;
  font: 10px/14px Roboto, "Open Sans", sans-serif;
}
h1, h2, h3, p, ul, ol {
  margin: 0;
  padding: 0;
  font-size: inherit;
  font-weight: normal;
  list-style: none;
}
button, input {
  font: inherit;
  color: inherit;
  margin: 0;
  padding: 0;
  border: 0;
  background: none;
}
svg {
  display: block;
  flex: none;
}
i {
  font-style: normal;
}
.defs {
  position: absolute;
  width: 0;
  height: 0;
}
.icon12 {
  width: 12px;
  height: 12px;
}
.icon14 {
  width: 14px;
  height: 14px;
}

/* title and menu */
.titlebar {
  display: flex;
  align-items: center;
  gap: 5px;
  height: 19px;
  padding: 1px 0 0 2px;
  background: #fff;
}
.win-controls, .mdi-controls {
  display: flex;
  align-items: center;
  margin-left: auto;
}
.win-controls button {
  width: 38px;
  display: flex;
  justify-content: center;
}
.win-controls svg {
  width: 10px;
  height: 10px;
}
.rec-dot {
  width: 6px;
  height: 6px;
  margin-left: -4px;
  border-radius: 3px;
  background: #5b50f0;
}
.menubar {
  display: flex;
  align-items: center;
  height: 17px;
  padding: 1px 0 0 5px;
  border-bottom: 1px solid #c8c8c8;
}
.menubar > button {
  padding: 0 9px;
}
.mdi-controls {
  gap: 9px;
  padding-right: 5px;
  color: #a0a0a0;
}
.mdi-controls svg {
  width: 7px;
  height: 7px;
}

/* toolbar */
.toolbar {
  display: flex;
  align-items: center;
  height: 26px;
  padding-top: 1px;
  border-bottom: 1px solid #b4b4b4;
  color: #2b7cb5;
}
.grip {
  width: 2px;
  height: 22px;
  margin: 0 2px;
  border-left: 2px dotted #b4b4b4;
}
.sep {
  width: 1px;
  height: 22px;
  margin: 0 2px;
  background: #b0b0b0;
}
.group {
  display: flex;
}
.group button {
  flex: 1;
  display: flex;
  align-items: center;
  justify-content: center;
  gap: 5px;
  height: 22px;
  white-space: nowrap;
}
.group svg {
  width: 15px;
  height: 15px;
}
.group .caret {
  width: 6px;
  height: 4px;
}
.group .on {
  background: #d9e6f2;
}
.group.pair {
  gap: 3px;
}
.w27 { width: 27px; }
.w33 { width: 33px; }
.w53 { width: 53px; }
.w67 { width: 67px; }
.w79 { width: 79px; }
.w133 { width: 133px; }
.w160 { width: 160px; }
.w240 { width: 240px; }
.group.text {
  width: 164px;
  color: #000;
}
.group.text button {
  gap: 6px;
}
.group.text svg {
  width: 13px;
  height: 13px;
}
.toolbar-right {
  display: flex;
  align-items: center;
  margin-left: auto;
  padding-right: 6px;
  color: #333;
}
.account {
  position: relative;
  margin-left: 13px;
}
.badge {
  position: absolute;
  top: -4px;
  left: 6px;
  width: 13px;
  height: 13px;
  border-radius: 7px;
  background: #e3302a;
  color: #fff;
  font-size: 9px;
  line-height: 13px;
}
.lvl {
  display: flex;
  flex-direction: column;
  align-items: center;
  margin: 0 12px 0 13px;
  color: #1aab2c;
  font-size: 7px;
  line-height: 7px;
}
.lvl svg {
  width: 7px;
  height: 7px;
}
.battery {
  width: 35px;
  height: 12px;
  padding: 1px;
  border: 1px solid #888;
  background: #fff;
}
.battery i {
  display: block;
  width: 34%;
  height: 100%;
  background: #22d839;
}

/* docked panels */
main {
  flex: 1;
  min-height: 0;
  display: flex;
  gap: 3px;
}
aside {
  width: 240px;
  display: flex;
  flex-direction: column;
}
.dock {
  flex: 1 1 0;
  min-height: 0;
  display: flex;
  flex-direction: column;
  background: #fff;
}
.dock:first-child {
  flex-basis: 2px;
}
.dock h2 {
  display: flex;
  justify-content: space-between;
  align-items: center;
  height: 15px;
  padding: 1px 4px 0;
  background: #bfcddb;
}
.dock h2 svg {
  width: 8px;
  height: 8px;
}
.quotes {
  width: 100%;
  height: 155px;
  border-collapse: collapse;
  table-layout: fixed;
}
.quotes th {
  height: 22px;
  padding: 0 4px;
  font-weight: normal;
  text-align: right;
  border-right: 1px solid #c8c8c8;
}
.quotes th:first-child {
  width: 96px;
  text-align: left;
}
.quotes th:nth-child(2), .quotes th:nth-child(3) {
  width: 47px;
}
.quotes td {
  padding: 0 3px;
  line-height: 12px;
  text-align: right;
  border-right: 1px solid #dcdcdc;
  border-bottom: 1px solid #d0d0d0;
}
.quotes th:last-child, .quotes td:last-child {
  border-right: 0;
}
.quotes td:first-child {
  text-align: left;
}
.quotes td svg {
  display: inline-block;
  width: 7px;
  height: 7px;
  margin: 0 6px 0 1px;
}
.up { color: #1414ff; }
.dn { color: #ff1414; }
.metal { background: #ffe4c4; }
.index { background: #b0e0e6; }
.add-row {
  display: flex;
  align-items: center;
  gap: 5px;
  height: 16px;
  padding: 0 3px;
  color: #808080;
}
.plus {
  width: 9px;
  height: 9px;
  background: linear-gradient(#1aab2c, #1aab2c) center / 9px 1px no-repeat, linear-gradient(#1aab2c, #1aab2c) center / 1px 9px no-repeat;
}
.count {
  margin-left: auto;
}

.tabs {
  display: flex;
  align-items: flex-start;
  height: 24px;
  margin-top: auto;
  padding-left: 4px;
  border-top: 1px solid #303030;
  background: #f0f0f0;
  color: #808080;
}
.tabs button {
  position: relative;
  height: 16px;
  padding: 1px 8px 0 7px;
}
.tabs button + button::before {
  content: "";
  position: absolute;
  left: 0;
  top: 3px;
  height: 10px;
  border-left: 1px solid #909090;
}
.tabs .active + button::before, .tabs button.active::before {
  display: none;
}
.tabs .active {
  margin-top: -1px;
  height: 17px;
  border: 1px solid #202020;
  border-top: 0;
  background: #fff;
  color: #000;
}

/* navigator tree */
.tree-wrap {
  flex: 1;
  min-height: 0;
  display: flex;
  overflow: hidden;
}
.tree {
  flex: 1;
  display: grid;
  grid-auto-rows: 1fr;
  height: 368px;
  padding: 2px 0 0 1px;
}
.tree li {
  display: flex;
  align-items: center;
  white-space: nowrap;
}
.tree li > svg {
  width: 14px;
  height: 14px;
  margin: 0 3px 0 2px;
}
.tree .g {
  display: flex;
  align-items: center;
  justify-content: center;
  align-self: stretch;
  width: 18px;
  background-repeat: no-repeat;
}
.g svg {
  width: 8px;
  height: 8px;
}
.g.v {
  background-image: repeating-linear-gradient(#aaa 0 1px, transparent 1px 2px);
  background-size: 1px 100%;
  background-position: 9px 0;
}
.g.v.h {
  background-image: repeating-linear-gradient(#aaa 0 1px, transparent 1px 2px), repeating-linear-gradient(90deg, #aaa 0 1px, transparent 1px 2px);
  background-size: 1px 100%, 8px 1px;
  background-position: 9px 0, 10px 8px;
}
.g.v.h.end {
  background-size: 1px 50%, 8px 1px;
}
.scrollbar {
  display: flex;
  flex-direction: column;
  align-items: center;
  justify-content: space-between;
  width: 13px;
  padding: 4px 0;
  background: #f0f0f0;
}
.scrollbar svg {
  width: 7px;
  height: 7px;
}
.thumb {
  width: 13px;
  flex: 0 0 280px;
  margin: 5px 0 auto;
  background: #cdcdcd;
}

/* chart */
.workspace {
  flex: 1;
  min-width: 0;
  display: flex;
  flex-direction: column;
}
.chart {
  flex: 1;
  display: grid;
  grid-template-columns: 1fr 43px;
  grid-template-rows: 1fr 17px;
  padding-left: 1px;
  border-left: 1px solid #606060;
  border-top: 1px solid #505050;
  background: #000;
  color: #fff;
  font: 8px/10px "Open Sans", sans-serif;
}
.plot {
  position: relative;
  border: 1px solid #fff;
}
.bars {
  position: absolute;
  width: 100%;
  height: 100%;
}
.chart-head {
  position: relative;
  padding: 3px 3px 0 2px;
}
.chart-title {
  display: flex;
  align-items: center;
  gap: 5px;
  height: 12px;
}
.chart-title > svg {
  width: 13px;
  height: 9px;
}
.ea {
  display: flex;
  align-items: center;
  gap: 4px;
  margin-left: auto;
}
.cap {
  width: 12px;
  height: 12px;
}
.panel {
  position: absolute;
  font: 10px/12px "Liberation Sans", Arial, sans-serif;
}
.panel-head {
  padding: 0 8px;
  background: #141414;
  white-space: nowrap;
}
.panel h3 {
  font-size: 11px;
  line-height: 14px;
  font-weight: bold;
}
.panel-body {
  background: #000;
  border-left: 1px solid #c0c0c0;
  border-right: 1px solid #696969;
}
.power {
  left: 17px;
  top: 59px;
  bottom: 0;
  width: 173px;
  display: flex;
  flex-direction: column;
}
.power .panel-head {
  position: relative;
  height: 31px;
  padding: 3px 0 0 8px;
}
.author {
  color: #ffd700;
  font-weight: bold;
}
.tag {
  color: #d3d3d3;
  font-size: 8px;
  line-height: 9px;
}
.power .panel-body {
  flex: 1;
  display: flex;
  flex-direction: column;
  padding: 18px 7px 0;
}
.preset {
  height: 23px;
  border: 1px solid #1464c8;
  background: #1e90ff;
  color: #000;
  font-size: 11px;
  font-weight: bold;
}
.pick {
  height: 21px;
  margin-top: 4px;
  border: 1px solid #808080;
  background: #404040;
  font-size: 9px;
  font-weight: bold;
}
.broker {
  margin-top: 2px;
  color: #90ee90;
  font-size: 9px;
  font-weight: bold;
  white-space: nowrap;
}
.point {
  color: #90ee90;
  font-size: 9px;
  line-height: 10px;
}
.fields {
  display: grid;
  grid-template-columns: 70px 65px;
  grid-auto-rows: 19px;
  gap: 6px 5px;
  margin-top: 12px;
}
.fields label {
  text-align: right;
  line-height: 16px;
}
.fields input {
  min-width: 0;
  border: 1px solid rgba(0, 0, 0, 0.2);
  background: #fff;
  color: #222;
  text-align: center;
}
.c-green { color: #90ee90; }
.c-yellow { color: #ffff00; }
.c-cyan { color: #30c8e8; }
.fields .b-mint { background: #e6ffe6; }
.fields .b-ivory { background: #ffffe6; }
.fields .b-cyan { background: #e6ffff; }
.fields .b-yellow { background: #ffffc8; }
.fields .b-rose { background: #ffe6e6; }
.fields .b-pink { background: #ffc8c8; }
.fields .b-green { background: #96ff96; }
.deal {
  height: 24px;
  margin-top: 5px;
  font-size: 12px;
  font-weight: bold;
}
.buy {
  margin-top: 59px;
  border: 1px solid #0a50d0;
  background: #1e90ff;
}
.sell {
  border: 1px solid #8b0a20;
  background: #dc143c;
}
.presets-title {
  margin-top: 5px;
  color: #ffff00;
  font-size: 9px;
  font-weight: bold;
  line-height: 20px;
}
.presets {
  display: grid;
  grid-auto-rows: 1fr;
  gap: 4px;
  height: 161px;
}
.green {
  border: 1px solid #006400;
  background: #329632;
}
.red {
  border: 1px solid #8b0000;
  background: #b43232;
}
.blue {
  border: 1px solid #0a32b4;
  background: #4678c8;
}
.pink {
  border: 1px solid #8b0a20;
  background: #c84664;
}
.monitor {
  left: 200px;
  top: 59px;
  width: 165px;
}
.monitor .panel-head {
  height: 23px;
  padding: 5px 7px 0;
}
.monitor .panel-body {
  height: 192px;
  padding: 13px 7px 0 6px;
  border-bottom: 1px solid #696969;
  text-align: center;
}
.cap-label {
  text-align: left;
  line-height: 14px;
  color: #a9a9a9;
}
.cap-label.open {
  margin-top: 14px;
}
.week {
  margin-top: 6px;
  color: #00ff00;
  font-size: 16px;
  font-weight: bold;
  line-height: 20px;
}
.week-pct {
  color: #1ea01e;
  font-size: 9px;
}
.now {
  margin-top: 4px;
  color: #ffff00;
  font-size: 18px;
  font-weight: bold;
  line-height: 22px;
}
.now-pct {
  margin-top: 4px;
  color: #808080;
  font-size: 9px;
}
.since {
  margin-top: 18px;
  color: #696969;
  font-size: 8px;
  text-align: left;
}
.box {
  left: 200px;
  width: 174px;
  padding: 2px 6px 0;
  border: 1px solid #696969;
  border-left-color: #c0c0c0;
  border-top-color: #e0e0e0;
  background: #000;
  color: #696969;
}
.box h3 {
  line-height: 16px;
  color: #fff;
}
.orders {
  top: 282px;
  height: 50px;
}
.orders p {
  margin-top: 11px;
}
.stop {
  top: 465px;
  height: 63px;
}
.stop .margin {
  margin-bottom: 9px;
  font-size: 9px;
  line-height: 10px;
}

.price-axis {
  position: relative;
  display: flex;
  padding: 5px 0 13px;
  font-family: Roboto, sans-serif;
}
.price-axis ol {
  flex: 1;
  display: grid;
  grid-auto-rows: 1fr;
}
.price-axis li {
  display: flex;
  align-items: center;
}
.price-axis li::before {
  content: "";
  width: 3px;
  height: 1px;
  margin-right: 1px;
  background: #fff;
}
.last {
  position: absolute;
  top: 315px;
  left: 1px;
  padding: 0 2px 0 3px;
  line-height: 9px;
  background: #778899;
  color: #000;
}
.tooltip {
  position: absolute;
  top: 272px;
  right: 1px;
  padding: 0 3px;
  border: 1px solid #767676;
  background: #fff;
  color: #575757;
  font-size: 10px;
  line-height: 15px;
  white-space: nowrap;
}
.time-axis {
  display: grid;
  grid-auto-flow: column;
  grid-auto-columns: 1fr;
  padding-right: 240px;
}
.time-axis li {
  position: relative;
  min-width: 0;
  padding-top: 2px;
  white-space: nowrap;
}
.time-axis li + li::before {
  content: "";
  position: absolute;
  left: 0;
  top: 0;
  height: 3px;
  border-left: 1px solid #fff;
}
.tabs.chart-tabs {
  height: 20px;
  padding-left: 3px;
  border-top-color: #c8c8c8;
}
.chart-tabs button {
  padding: 0 9px;
}
.chart-tabs .active {
  padding: 1px 9px 0;
}
.tab-scroll {
  display: flex;
  gap: 13px;
  margin-left: auto;
  padding: 5px 10px 0 0;
}
.tab-scroll svg {
  width: 3px;
  height: 6px;
}

/* toolbox */
.toolbox {
  display: flex;
  height: 160px;
  border-top: 1px solid #a0a0a0;
}
.toolbox-side {
  display: flex;
  flex-direction: column;
  align-items: center;
  justify-content: space-between;
  width: 15px;
  padding: 5px 0 4px;
  border-right: 2px solid #f0f0f0;
  background: #bfcddb;
}
.toolbox-side svg {
  width: 8px;
  height: 8px;
}
.toolbox-side span {
  writing-mode: vertical-rl;
  transform: rotate(180deg);
}
.toolbox-main {
  flex: 1;
  display: flex;
  flex-direction: column;
  background: #fff;
}
.trades {
  width: 100%;
  border-collapse: collapse;
  table-layout: fixed;
}
.trades th {
  height: 20px;
  padding: 1px 5px 0;
  font-weight: normal;
  text-align: right;
  border-right: 1px solid #b4b4b4;
}
.trades th:last-child {
  border-right: 0;
}
.trades td {
  height: 17px;
  padding: 0 3px 0 5px;
  background: #c8c8c8;
  font-weight: bold;
  text-align: right;
}
.trades .left {
  text-align: left;
}
.sort {
  margin-left: 11px;
  font-size: 7px;
}
.bullet {
  margin-right: 9px;
}
.c1 { width: 227px; }
.c2 { width: 158px; }
.c3 { width: 117px; }
.c4 { width: 175px; }
.tabs.toolbox-tabs {
  height: 21px;
  border-bottom: 1px solid #c8c8c8;
}
.services {
  display: flex;
  gap: 9px;
  margin-left: auto;
  padding: 3px 6px 0 0;
}
.services a {
  display: flex;
  align-items: center;
  gap: 3px;
  color: #000;
  text-decoration: none;
}
.services svg {
  width: 13px;
  height: 13px;
}

/* status bar */
.statusbar {
  display: flex;
  align-items: center;
  height: 19px;
  padding-top: 1px;
}
.statusbar span {
  height: 16px;
  padding-left: 4px;
  line-height: 16px;
  border-left: 1px solid #a0a0a0;
}
.statusbar .help {
  flex: 1;
  padding-left: 2px;
  border-left: 0;
}
.s107 { width: 107px; }
.s81 { width: 81px; }
.s59 { width: 59px; }
.s57 { width: 57px; }
.statusbar .net {
  display: flex;
  align-items: center;
  gap: 4px;
  width: 98px;
}
.net svg {
  width: 12px;
  height: 10px;
}

/* taskbar */
.taskbar {
  display: flex;
  height: 33px;
  background: linear-gradient(90deg, #001820, #000a18);
  color: #fff;
}
.start {
  width: 40px;
  display: flex;
  align-items: center;
  justify-content: center;
}
.start svg {
  width: 14px;
  height: 14px;
}
.search {
  display: flex;
  align-items: center;
  gap: 10px;
  width: 285px;
  padding-left: 10px;
  background: #f2f2f2;
}
.search svg {
  width: 13px;
  height: 13px;
}
.search input {
  flex: 1;
  font-size: 12px;
}
.search input::placeholder {
  color: #444;
  opacity: 1;
}
.apps {
  display: flex;
  gap: 1px;
}
.apps button {
  width: 40px;
  display: flex;
  align-items: center;
  justify-content: center;
}
.apps svg {
  width: 18px;
  height: 18px;
}
.apps button:first-child svg {
  width: 14px;
  height: 14px;
}
.run {
  background: linear-gradient(#76b9ed, #76b9ed) center bottom / 34px 2px no-repeat;
}
.run.current {
  background-color: #45505c;
  background-size: 100% 2px;
}
.tray {
  display: flex;
  align-items: center;
  gap: 7px;
  margin-left: auto;
  padding-right: 2px;
}
.tray > svg {
  width: 13px;
  height: 13px;
}
.clock {
  margin-left: 3px;
  text-align: center;
  line-height: 15px;
}
.notes {
  position: relative;
  display: flex;
  align-items: center;
  align-self: stretch;
  margin-left: 6px;
  padding-right: 16px;
  border-right: 1px solid #4a5460;
}
.notes svg {
  width: 14px;
  height: 14px;
}
.notes span {
  position: absolute;
  top: 14px;
  left: 7px;
  width: 12px;
  border: 1px solid #aaa;
  border-radius: 6px;
  background: #333;
  font-size: 9px;
  line-height: 10px;
}
```

FILE: chart.js
```js
// Each bar is <g|r>high-low:close in thirds of a pixel below y. "_n" skips n bars.
const STEP = 3.322;
const segments = [
  { x: 2.3, y: 46, bars: 'g990-1018:1015 g965-1012:975 r970-1012:1000 g978-1028:990 g972-1004:985' },
  { x: 192.4, y: 336, bars: 'g315-392:320 g295-345:322 r310-365:350 r325-370:350 r340-375:355 g345-385:355 r355-400:380 g318-395:355 r320-390 r320-400 _20 ' +
    'g350-395:362 g325-375:325 r322-345:342 g320-375:345 r335-395:365 r360-398:387 g350-392:360 r345-380:355 g322-385:352 r340-375:355 r342-388:350 r328-370:362 r358-395:382 r375-400:385 r380-400:388 _4 ' +
    'g373-398:375 g330-390:345 g328-362:345 g315-360:317 g290-345:310 g277-330:282 g262-290:281 r282-330:320 g290-357:295 g255-300:257 r245-292:272 r270-305:278 g257-282:277 g210-305:215 r183-235:212 r198-237:210 r205-245:240 r237-278:260 g222-265:235 r217-255:252 g228-265:240 g225-252:240 g210-253:212 g172-230:187 r172-212:185 g148-192:180 r150-200:185 r165-195:190 g127-192:150 r120-160:155 g115-160:158 r150-165:158 g100-175:125 g110-137:113 r110-130:125 r125-290:235 r235-258:257 r252-322:312 r282-432:400 g368-433:370 g298-375:320 r312-340:322 g308-345:320 g265-322:280 g262-295:275 g232-275:243 g212-260:243 r230-298:250 g218-298:262 r260-300:293 g280-302:290 r287-302:298 r285-330:315 r318-362:355 r305-325:320 g310-357:315 g318-345:338 g292-345:295 g278-300:298 r280-298:297 g262-300:268 g232-272:262 r237-275:272 g252-280:258 g235-272:243 g228-272:240 g205-240:222' },
  { x: 577.3, y: 336, bars: 'g183-222:215 r188-240:228 r217-260:252 r235-277:270 g240-297:247 r245-295:275 g262-282:270 g255-282:267 g248-272:258 r258-302:288 g262-290:277 r250-287:282 r277-320:305 g270-310:270 g260-285:262 r252-343:332 r325-400:362 r342-422:400 g342-405:382 g363-415:375 g335-390:355 r343-382:363 g280-368:285 g262-308:270 r265-322:293 r285-323:313 g273-350:298 r285-338:312 g297-338:302 g246-323:263 g247-277:253 g235-270:240 g213-262:232 r232-282:282 g252-287:255 r243-285:273 r270-352:272 r243-300:285 r283-340:335 r288-350:347 g273-352:300 g262-305:275 r250-285:280 g237-275:247 g213-260:233 g193-237:208 r207-248:240 r225-257:245 g220-250:230 g217-237:222 r213-250:248 r248-283:267 r257-297:292 r288-332:325 g297-343:308 g300-327:305 r298-355:343 g297-380:328 g300-332:320 g312-332:320 g308-325:312 g283-317:287 r273-320:318 g270-325:300 r277-305:303 r297-313:300 r297-315:312 r300-320:318 g305-320:307 g278-315:283 g273-290:277 g262-285:273 g262-280:272 g260-278:263 g240-268:253 r250-278:262 g258-275:262 r250-267:263 r262-295:292 r277-302:297 r265-298:297 g290-300:293' },
  { x: 849.7, y: 196, bars: 'r653-685:660 g607-662:627 g593-633:602 r600-633:618 g590-625:603 g593-612:600 g588-612:597 r588-602:598 r583-612:600 g585-612:592 g578-600:588 r582-600:592 g547-600:550 g495-555:510 r498-533:512 r475-525:523 g478-537:485 g442-498:463 g255-468:292 r247-365:317 g285-350:315 g282-332:302 g248-328:250 r243-300:290 g108-292:118 g90-140:113 r112-218:185 r153-243:210 g138-215:152 r122-175:155 r125-192:185 g97-187:103 g65-112:75 r68-98:85 r72-108:95 r92-120:98 r95-132:105 r95-148:145 g120-172:130 g108-150:118 g93-125:97 r82-127:112 r110-183:180 g143-195:148 r112-192:160 g137-172:140 g127-147:132 r125-172:137 g93-143:97 r90-155:153 g153-213:158 r158-195:185 g150-252:165 g153-183:157 g140-165:143 r138-192:185 r183-285:240 r225-247:242 g198-252:220 r215-240:230 r217-260:238 g180-240:182 r168-205:193 r182-247:243 g197-253:207 r182-333:295 g255-360:257 g198-252:207 g190-207:197 g165-203:170 g148-173:152 g148-157:151 r145-215:190' },
  { x: 1092.3, y: 196, bars: 'r190-392:293 g245-330:258 g208-272:225 r153-410:253 g198-275:210 r207-248:222 g205-235:210 g197-222:207 g197-222:205 r207-237:220 r215-262:258 g243-277:248 r237-267:253 g228-285:232 r228-282:253 g213-255:222 g207-230:213 g197-217:202 r192-207:203 g153-210:160 g150-172:152 r148-175:172 g157-178:168 r162-183:170 r165-273:203 r173-208:207 g180-215:183 r182-228:227 r228-250:245 r242-255:252 r340-365:362 g290-375:318 g315-378:335 r335-412:373 r372-400:388 r383-592:592 g590-594:591 g565-642:578 g548-618:560 g525-583:560 g480-567:507 g478-522:483 g410-487:435 g323-457:390 r390-477:475 r477-540:500 r488-655:627 g548-627:552 r540-575:560 r537-575:567 r473-622:597 g580-622:590 g447-605:492 g392-495:415 r413-457:450 g375-460:397 g342-400:347 r297-413:410 g357-422:372 r360-430:380 r357-450:405 r402-437:427 g380-447:418 r405-457:455 r443-513:460 r453-473:467 g347-472:363 r352-462:432 g390-435:397 g375-408:393 r390-417:400 g380-410:393 r388-432:405 r390-432:410 g367-413:370 g360-375:368' }
];

function drawBars() {
  const paths = { g: '', r: '' };
  for (const seg of segments) {
    let x = seg.x;
    let open = null;
    for (const bar of seg.bars.split(' ')) {
      if (bar[0] === '_') {
        x += STEP * Number(bar.slice(1));
        open = null;
        continue;
      }
      const [high, low, close = low] = bar.slice(1).split(/[-:]/).map(Number);
      const y = v => (seg.y + v / 3).toFixed(1);
      const px = v => v.toFixed(1);
      paths[bar[0]] += `M${px(x)} ${y(high)}V${y(low)}M${px(x)} ${y(close)}h1.6`;
      if (open !== null && open >= high && open <= low) {
        paths[bar[0]] += `M${px(x)} ${y(open)}h-1.6`;
      }
      open = close;
      x += STEP;
    }
  }
  return `<path d="${paths.g}" stroke="#00e600"/><path d="${paths.r}" stroke="#f00000"/>`;
}

document.getElementById('bars').innerHTML =
  '<rect x="847" y="217.5" width="242" height="295.500" fill="#00203f"/>' +
  '<path d="M846.5 0V766" stroke="#707070" stroke-dasharray="3 2"/>' +
  '<path d="M1089 0V766" stroke="#606060" stroke-dasharray="3 2"/>' +
  '<path d="M1089 217.5H1620" stroke="#1e90ff" stroke-width="1.500"/>' +
  '<path d="M1089 513H1620" stroke="#dc143c" stroke-width="1.500"/>' +
  drawBars() +
  '<path d="M0 318.5H1620" stroke="#778899"/>' +
  '<path d="M1337 0h8l-4 4z" fill="#778899"/>';

// price scale, one label per 4.55; the tooltip sits over row 10
let prices = '';
for (let i = 0; i < 28; i++) {
  prices += `<li>${i === 10 ? '' : (4227 - i * 4.55).toFixed(2)}</li>`;
}
document.getElementById('prices').innerHTML = prices;

const times = ['26 Nov 2025', '26 Nov 23:30', '27 Nov 01:50', '27 Nov 03:10', '27 Nov 04:30', '27 Nov 05:50',
  '27 Nov 07:10', '27 Nov 08:30', '27 Nov 09:50', '27 Nov 11:10', '27 Nov 12:30', '27 Nov 13:50', '27 Nov 15:10',
  '27 Nov 16:30', '27 Nov 17:50', '27 Nov 19:10', '28 Nov 01:00', '28 Nov 02:20', '28 Nov 03:40', '28 Nov 05:00',
  '28 Nov 06:20', '28 Nov 07:40', '28 Nov 09:00', '28 Nov 11:55', '28 Nov 13:15', '28 Nov 14:35'];
document.getElementById('times').innerHTML = times.map(t => `<li>${t}</li>`).join('');
```
